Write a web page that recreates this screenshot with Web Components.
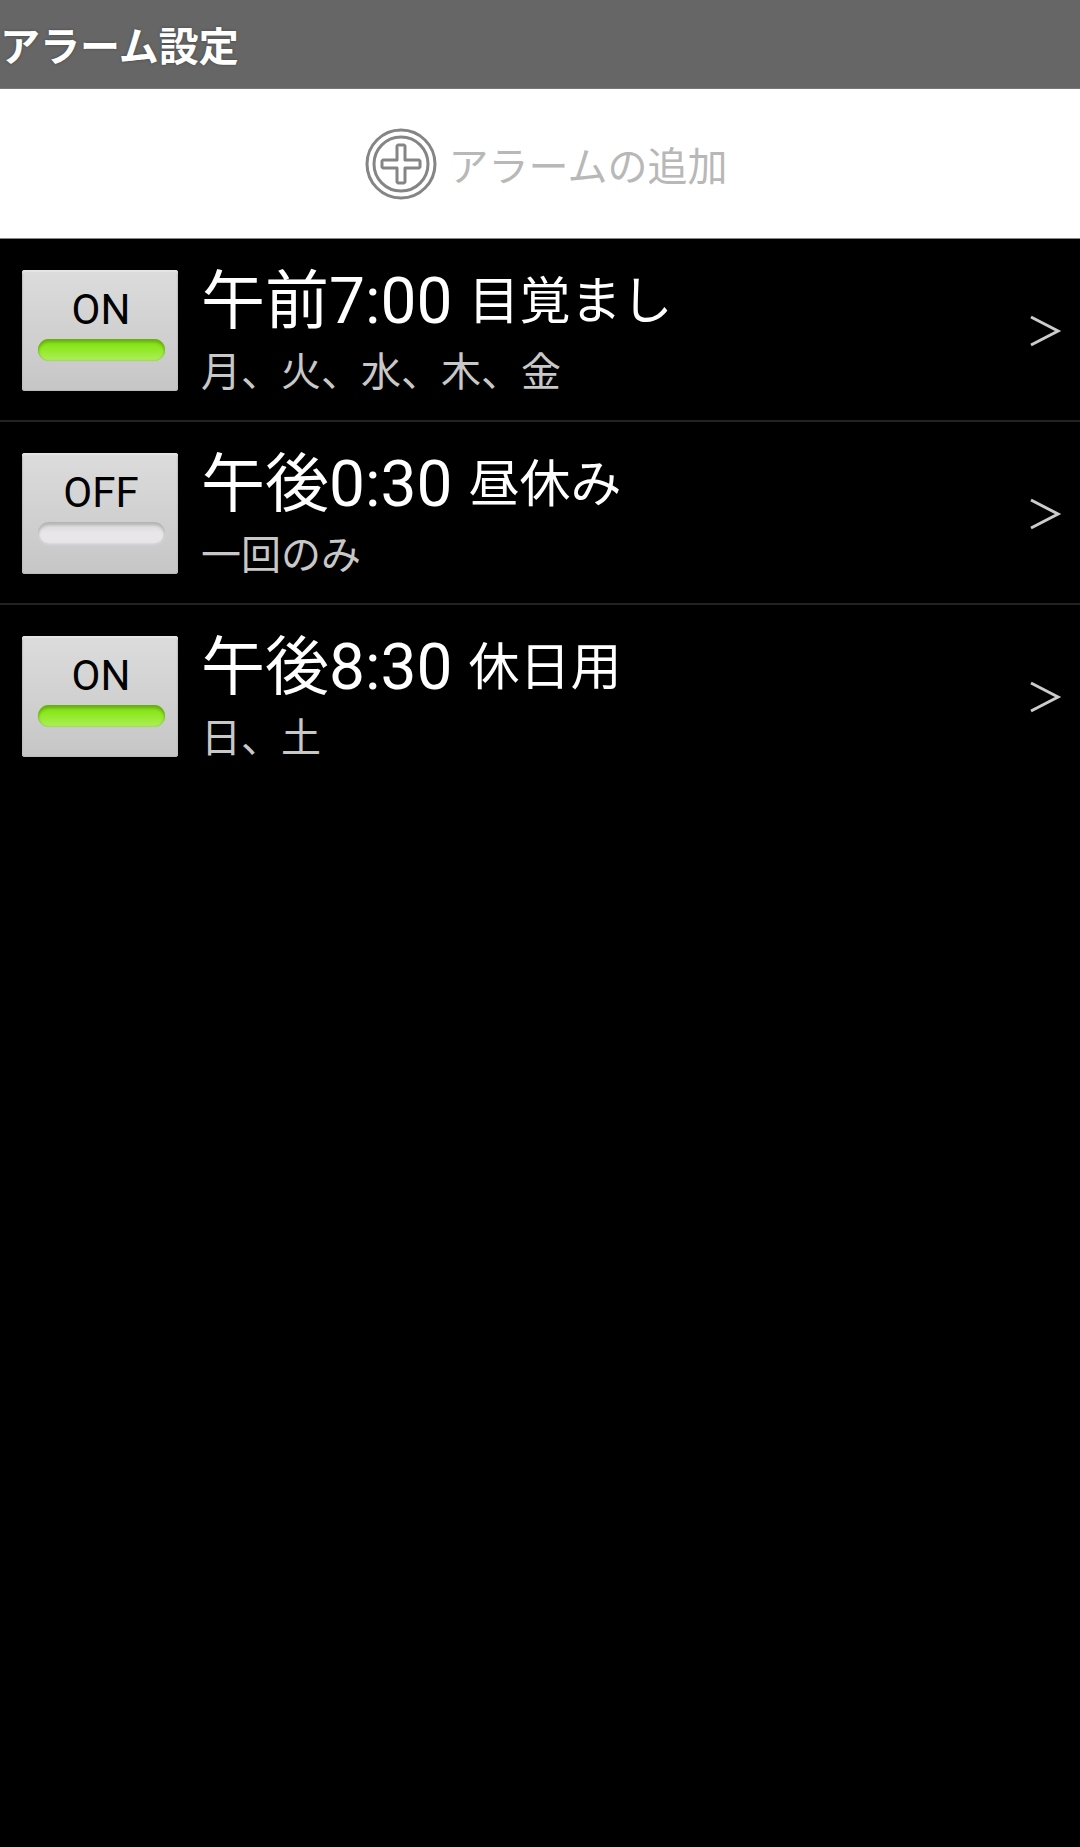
<!DOCTYPE html>
<html lang="ja">
<head>
<meta charset="UTF-8">
<meta name="viewport" content="width=device-width, initial-scale=1">
<title>アラーム設定</title>
<style>
    body {
        margin: 0;
        min-height: 100vh;
        background: #000;
        color: #fff;
        font-family: Roboto, "Noto Sans CJK JP", sans-serif;
    }
</style>
</head>
<body>
<alarm-header>アラーム設定</alarm-header>
<alarm-add>アラームの追加</alarm-add>
<alarm-list>
    <alarm-item on>
        <span slot="time">午前7:00</span>
        <span slot="label">目覚まし</span>
        <span slot="days">月、火、水、木、金</span>
    </alarm-item>
    <alarm-item>
        <span slot="time">午後0:30</span>
        <span slot="label">昼休み</span>
        <span slot="days">一回のみ</span>
    </alarm-item>
    <alarm-item on>
        <span slot="time">午後8:30</span>
        <span slot="label">休日用</span>
        <span slot="days">日、土</span>
    </alarm-item>
</alarm-list>

<script>
class AlarmHeader extends HTMLElement {
    constructor() {
        super();
        this.attachShadow({ mode: "open" });
        this.shadowRoot.innerHTML = `
            <style>
                :host {
                    display: block;
                    background: #666;
                    border-bottom: 1px solid #777;
                }
                h1 {
                    margin: 0;
                    padding: 14px 0;
                    font-family: "Noto Sans CJK JP", sans-serif;
                    font-size: 40px;
                    line-height: 60px;
                    font-weight: 700;
                    text-shadow: 0 0 3px #444;
                }
            </style>
            <h1><slot></slot></h1>
        `;
    }
}

class AlarmAdd extends HTMLElement {
    constructor() {
        super();
        this.attachShadow({ mode: "open" });
        this.shadowRoot.innerHTML = `
            <style>
                :host {
                    display: block;
                    background: #fff;
                    border-bottom: 1px solid #888;
                }
                button {
                    display: flex;
                    align-items: center;
                    justify-content: center;
                    gap: 12px;
                    width: 100%;
                    height: 149px;
                    margin: 0;
                    padding: 0 0 0 12px;
                    border: 0;
                    background: none;
                    color: #b8b8b8;
                    font: 400 40px/60px "Noto Sans CJK JP", sans-serif;
                    cursor: pointer;
                }
                svg {
                    width: 72px;
                    height: 72px;
                }
            </style>
            <button type="button">
                <svg viewBox="0 0 72 72" fill="none" stroke="#858585" stroke-width="3" aria-hidden="true">
                    <circle cx="36" cy="36" r="34"/>
                    <circle cx="36" cy="36" r="27"/>
                    <path stroke-linejoin="round" d="M33 17h6l1 1v14h14l1 1v6l-1 1H40v14l-1 1h-6l-1-1V40H18l-1-1v-6l1-1h14V18z"/>
                </svg>
                <slot></slot>
            </button>
        `;
    }
}

class AlarmList extends HTMLElement {
    constructor() {
        super();
        this.attachShadow({ mode: "open" });
        this.shadowRoot.innerHTML = `
            <style>
                :host {
                    display: block;
                }
                ::slotted(alarm-item:not(:last-child)) {
                    border-bottom: 2px solid #222;
                }
            </style>
            <slot></slot>
        `;
    }
}

class AlarmToggle extends HTMLElement {
    constructor() {
        super();
        this.attachShadow({ mode: "open" });
        this.shadowRoot.innerHTML = `
            <style>
                :host {
                    display: block;
                    flex: none;
                }
                button {
                    display: flex;
                    flex-direction: column;
                    align-items: center;
                    width: 156px;
                    height: 121px;
                    margin: 0;
                    padding: 15px 0 0 2px;
                    border: 0;
                    border-radius: 3px;
                    background: linear-gradient(#dcdcdc, #c6c6c6);
                    box-shadow: inset 0 2px 1px #e6e6e6, inset 0 0 1px 1px #bbb;
                    color: #000;
                    font: 400 42px/50px Roboto, sans-serif;
                    cursor: pointer;
                }
                .bar {
                    width: 127px;
                    height: 22px;
                    margin-top: 4px;
                    border-radius: 11px;
                    background: linear-gradient(#d8d6d8, #e8e6e8 50%);
                    box-shadow: inset 0 3px 3px #b4b4b4, inset 0 0 2px #bbb, 0 1px 2px #d8d4dc;
                }
                button[aria-pressed="true"] .bar {
                    background: linear-gradient(#7fdc14, #8ee822 40%, #aeee5c);
                    box-shadow: inset 0 3px 3px #69ad14, inset 0 0 2px #7cc22c, 0 1px 2px #d0c4dc;
                }
            </style>
            <button type="button"><span class="text"></span><span class="bar"></span></button>
        `;
        this.button = this.shadowRoot.querySelector("button");
        this.text = this.shadowRoot.querySelector(".text");
        this.button.addEventListener("click", () => this.toggleAttribute("on"));
    }

    static get observedAttributes() {
        return ["on"];
    }

    connectedCallback() {
        this.render();
    }

    attributeChangedCallback() {
        this.render();
    }

    render() {
        const on = this.hasAttribute("on");
        this.text.textContent = on ? "ON" : "OFF";
        this.button.setAttribute("aria-pressed", on);
    }
}

class AlarmItem extends HTMLElement {
    constructor() {
        super();
        this.attachShadow({ mode: "open" });
        this.shadowRoot.innerHTML = `
            <style>
                :host {
                    display: flex;
                    align-items: center;
                    gap: 23px;
                    padding: 31px 18px 29px 22px;
                }
                a {
                    flex: 1;
                    display: flex;
                    align-items: center;
                    justify-content: space-between;
                    height: 121px;
                    color: inherit;
                    text-decoration: none;
                }
                .info {
                    display: flex;
                    flex-direction: column;
                    gap: 5px;
                    padding-top: 8px;
                }
                .title {
                    display: flex;
                    align-items: center;
                    gap: 16px;
                    line-height: 72px;
                }
                .time {
                    font-size: 64px;
                }
                .label {
                    font-size: 51px;
                }
                .days {
                    color: #c8c8c8;
                    font-size: 40px;
                    line-height: 60px;
                }
                svg {
                    flex: none;
                    width: 32px;
                    height: 32px;
                }
            </style>
            <alarm-toggle></alarm-toggle>
            <a href="#edit">
                <div class="info">
                    <div class="title">
                        <span class="time"><slot name="time"></slot></span>
                        <span class="label"><slot name="label"></slot></span>
                    </div>
                    <div class="days"><slot name="days"></slot></div>
                </div>
                <svg viewBox="0 0 32 32" fill="none" stroke="#ccc" stroke-width="3" aria-hidden="true">
                    <path d="M1 2l27 14L1 30"/>
                </svg>
            </a>
        `;
        this.toggle = this.shadowRoot.querySelector("alarm-toggle");
    }

    static get observedAttributes() {
        return ["on"];
    }

    attributeChangedCallback(name, oldValue, newValue) {
        this.toggle.toggleAttribute("on", newValue !== null);
    }
}

customElements.define("alarm-header", AlarmHeader);
customElements.define("alarm-add", AlarmAdd);
customElements.define("alarm-toggle", AlarmToggle);
customElements.define("alarm-item", AlarmItem);
customElements.define("alarm-list", AlarmList);
</script>
</body>
</html>
